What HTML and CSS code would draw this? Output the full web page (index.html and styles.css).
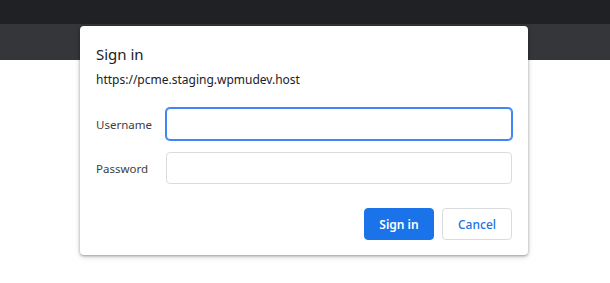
FILE: index.html
```html
<!DOCTYPE html>
<html lang="en">
<head>
    <meta charset="UTF-8">
    <meta name="viewport" content="width=device-width, initial-scale=1.0">
    <title>Sign in</title>
    <link rel="stylesheet" href="styles.css">
</head>
<body>

<div class="tab-strip"></div>
<div class="toolbar"></div>
<div class="page"></div>

<!-- Basic auth prompt -->
<div class="auth-dialog">
    <div class="auth-title">Sign in</div>
    <div class="auth-origin">https://pcme.staging.wpmudev.host</div>
    <div class="auth-fields">
        <div class="auth-row">
            <label class="auth-label" for="username">Username</label>
            <input type="text" id="username" class="auth-input is-focused">
        </div>
        <div class="auth-row">
            <label class="auth-label" for="password">Password</label>
            <input type="password" id="password" class="auth-input">
        </div>
    </div>
    <div class="auth-buttons">
        <button class="btn btn-primary">Sign in</button>
        <button class="btn btn-secondary">Cancel</button>
    </div>
</div>

</body>
</html>
```

FILE: styles.css
```css
/* Browser chrome + auth prompt */
body {
    margin: 0;
    font-family: "Noto Sans", "Open Sans", Arial, sans-serif;
    background: #fff;
}
.tab-strip {
    height: 24px;
    background: #202124;
}
.toolbar {
    height: 36px;
    background: #35363a;
}
.page {
    height: 223px;
    background: #fff;
}
.auth-dialog {
    position: absolute;
    left: 80px;
    top: 26px;
    width: 448px;
    box-sizing: border-box;
    padding: 18px 16px 15px 16px;
    background: #fff;
    border-radius: 4px;
    box-shadow: 0 1px 3px rgba(0, 0, 0, 0.35), 0 2px 6px rgba(0, 0, 0, 0.12);
}
.auth-title {
    font-size: 15px;
    line-height: 20px;
    color: #202124;
}
.auth-origin {
    margin-top: 8px;
    font-size: 12px;
    line-height: 16px;
    color: #202124;
}
.auth-fields {
    margin-top: 20px;
    display: flex;
    flex-direction: column;
    gap: 12px;
}
.auth-row {
    display: flex;
    align-items: center;
}
.auth-label {
    width: 70px;
    font-size: 11.5px;
    color: #3c4043;
}
.auth-input {
    flex: 1;
    height: 32px;
    box-sizing: border-box;
    border: 1px solid #dadce0;
    border-radius: 4px;
    padding: 0 8px;
    outline: none;
    font-size: 12px;
    margin: 0;
}
.auth-input.is-focused {
    border-color: #4285f4;
    box-shadow: 0 0 0 1px #4285f4;
}
.auth-buttons {
    margin-top: 24px;
    display: flex;
    justify-content: flex-end;
    gap: 8px;
}
.btn {
    width: 70px;
    height: 32px;
    border-radius: 4px;
    font-family: inherit;
    font-size: 12px;
    font-weight: 600;
    cursor: pointer;
}
.btn-primary {
    background: #1a73e8;
    border: 1px solid #1a73e8;
    color: #fff;
}
.btn-secondary {
    background: #fff;
    border: 1px solid #dadce0;
    color: #1a73e8;
    font-weight: 500;
}
```
